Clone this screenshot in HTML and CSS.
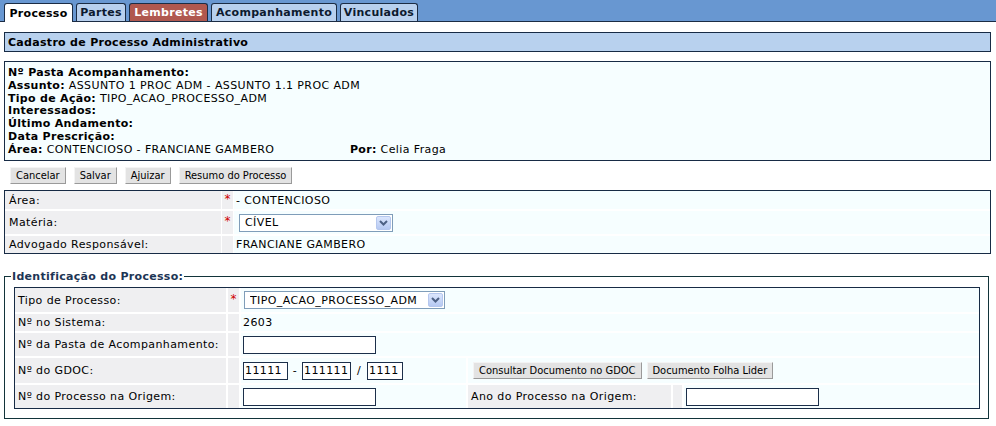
FILE: index.html
```html
<!DOCTYPE html>
<html lang="pt-BR">
<head>
<meta charset="utf-8">
<title>Cadastro de Processo Administrativo</title>
<link rel="stylesheet" href="styles.css">
</head>
<body>
<nav class="tabs">
  <a class="tab t1 active">Processo</a>
  <a class="tab t2">Partes</a>
  <a class="tab t3 alert">Lembretes</a>
  <a class="tab t4">Acompanhamento</a>
  <a class="tab t5">Vinculados</a>
</nav>
<main class="page">
  <h1 class="title">Cadastro de Processo Administrativo</h1>
  <div class="summary">
    <div><b>Nº Pasta Acompanhamento:</b></div>
    <div><b>Assunto:</b> ASSUNTO 1 PROC ADM - ASSUNTO 1.1 PROC ADM</div>
    <div><b>Tipo de Ação:</b> TIPO_ACAO_PROCESSO_ADM</div>
    <div><b>Interessados:</b></div>
    <div><b>Último Andamento:</b></div>
    <div><b>Data Prescrição:</b></div>
    <div class="split"><span class="area"><b>Área:</b> CONTENCIOSO - FRANCIANE GAMBERO</span><span><b>Por:</b> Celia Fraga</span></div>
  </div>
  <div class="actions">
    <button class="btn">Cancelar</button>
    <button class="btn">Salvar</button>
    <button class="btn">Ajuizar</button>
    <button class="btn">Resumo do Processo</button>
  </div>
  <div class="grid g1">
    <div class="lbl">Área:</div><div class="req">*</div><div class="val">- CONTENCIOSO</div>
    <div class="lbl">Matéria:</div><div class="req">*</div>
    <div class="val"><span class="select w154"><select><option>CÍVEL</option></select><span class="arrow"><svg width="9" height="6" viewBox="0 0 9 6"><path d="M1 1 L4.5 4.5 L8 1" fill="none" stroke="#4d6185" stroke-width="2"/></svg></span></span></div>
    <div class="lbl">Advogado Responsável:</div><div class="req"></div><div class="val">FRANCIANE GAMBERO</div>
  </div>
  <fieldset class="box">
    <legend>Identificação do Processo:</legend>
    <div class="grid g2">
      <div class="lbl">Tipo de Processo:</div><div class="req">*</div>
      <div class="val span4"><span class="select w201"><select><option>TIPO_ACAO_PROCESSO_ADM</option></select><span class="arrow"><svg width="9" height="6" viewBox="0 0 9 6"><path d="M1 1 L4.5 4.5 L8 1" fill="none" stroke="#4d6185" stroke-width="2"/></svg></span></span></div>

      <div class="lbl">Nº no Sistema:</div><div class="req"></div><div class="val span4">2603</div>

      <div class="lbl">Nº da Pasta de Acompanhamento:</div><div class="req"></div>
      <div class="val span4"><input class="inp w133" type="text"></div>

      <div class="lbl">Nº do GDOC:</div><div class="req"></div>
      <div class="val"><input class="inp w45" type="text" value="11111"><span class="sep">-</span><input class="inp w49" type="text" value="111111"><span class="sep wide">/</span><input class="inp w36" type="text" value="1111"></div>
      <div class="val span3 btns"><button class="btn">Consultar Documento no GDOC</button><button class="btn">Documento Folha Lider</button></div>

      <div class="lbl">Nº do Processo na Origem:</div><div class="req"></div>
      <div class="val"><input class="inp w133" type="text"></div>
      <div class="lbl">Ano do Processo na Origem:</div><div class="req"></div>
      <div class="val"><input class="inp w133" type="text"></div>
    </div>
  </fieldset>
</main>
</body>
</html>
```

FILE: styles.css
```css
* { box-sizing: border-box; }
html, body { margin: 0; padding: 0; background: #fff; }
body {
  font-family: "DejaVu Sans", Verdana, sans-serif;
  font-size: 11px;
  letter-spacing: 0.4px;
  color: #000;
}
b, .tab, .title, legend { letter-spacing: 0.3px; }
.tabs {
  display: flex;
  align-items: flex-end;
  gap: 3px;
  height: 22px;
  padding: 3px 0 0 4px;
  background: #6897d1;
  border-bottom: 1px solid #1b2c44;
}
.tab {
  display: flex;
  align-items: center;
  justify-content: center;
  height: 18px;
  padding: 0;
  font-weight: bold;
  color: #0d1a2e;
  background: #b8d0ee;
  border: 1px solid #1b2c44;
  border-bottom: none;
  border-radius: 3px 3px 0 0;
  white-space: nowrap;
}
.t1 { width: 69px; }
.t2 { width: 50px; }
.t3 { width: 79px; }
.t4 { width: 126px; }
.t5 { width: 78px; }
.tab.active { background: #fff; color: #000; height: 19px; margin-bottom: -1px; }
.tab.alert { background: #b0584f; color: #fff; }

.page { padding: 0 5px 0 4px; }
.title {
  margin: 10px 0 0;
  height: 20px;
  padding: 0 3px;
  display: flex;
  align-items: center;
  font-size: 11px;
  font-weight: bold;
  background: #b8d1ee;
  border: 1px solid #172b45;
}
.summary {
  margin-top: 9px;
  height: 100px;
  padding: 5px 3px 0;
  line-height: 12.8px;
  background: #f6feff;
  border: 1px solid #172b45;
}
.split { display: flex; }
.area { width: 342px; }

.actions {
  display: flex;
  gap: 8px;
  margin-top: 6px;
  padding-left: 6px;
}
.btn {
  height: 17px;
  padding: 0 5px;
  font-family: "DejaVu Sans Condensed", "Liberation Sans", sans-serif;
  font-size: 11px;
  letter-spacing: 0;
  color: #000;
  background: #e3e3e3;
  border: 1px solid;
  border-color: #f4f4f4 #9a9a9a #9a9a9a #f4f4f4;
  border-radius: 0;
  line-height: 14px;
}

.grid {
  display: grid;
  background: #fff;
  border: 1px solid #172b45;
}
.g1 {
  margin-top: 6px;
  grid-template-columns: 216px 11px 1fr;
  grid-template-rows: 18px 23px 17px;
  column-gap: 1px;
  row-gap: 2px;
}
.lbl, .req, .val { display: flex; align-items: center; }
.lbl { background: #efeff1; padding-left: 4px; }
.req { background: #efeff1; color: #d00000; justify-content: center; padding-bottom: 3px; font-size: 12px; letter-spacing: 0; }
.val { background: #f6feff; padding-left: 2px; }

.box {
  margin: 16px 2px 0 0;
  padding: 4px 8px 9px 9px;
  border: 1px solid #12343a;
  min-inline-size: 0;
}
.box legend {
  padding: 0 1px;
  margin-left: -3px;
  font-weight: bold;
  color: #1d3555;
  line-height: 13px;
}
.g2 {
  grid-template-columns: 211px 11px 225px 203px 9px 1fr;
  grid-template-rows: 24px 17px 23px 25px 23px;
  gap: 2px;
}
.g2 .lbl { padding-left: 3px; }
.span4 { grid-column: span 4; }
.span3 { grid-column: span 3; }

.select {
  display: inline-flex;
  align-items: center;
  height: 18px;
  margin-left: 3px;
  background: #fff;
  border: 1px solid #7f9db9;
}
.g2 .select { margin-left: 1px; }
.w154 { width: 154px; }
.w201 { width: 201px; }
.select select {
  flex: 1;
  min-width: 0;
  height: 16px;
  appearance: none;
  -webkit-appearance: none;
  border: 0;
  outline: none;
  background: transparent;
  font-family: "DejaVu Sans", Verdana, sans-serif;
  font-size: 11px;
  letter-spacing: 0.4px;
  color: #000;
  padding: 0 0 0 5px;
}
.arrow {
  display: flex;
  align-items: center;
  justify-content: center;
  width: 15px;
  height: 14px;
  margin-right: 1px;
  background: linear-gradient(#dbe6fd, #b6c9f2);
  border: 1px solid #b5c7ee;
  border-radius: 2px;
}

.inp {
  height: 18px;
  padding: 0 1px;
  margin: 0;
  font-family: "DejaVu Sans", Verdana, sans-serif;
  font-size: 11px;
  letter-spacing: 0.4px;
  color: #000;
  background: #fff;
  border: 1px solid #1c2f4a;
  border-radius: 0;
  outline: none;
}
.w133 { width: 133px; }
.w45 { width: 45px; }
.w49 { width: 49px; }
.w36 { width: 36px; }
.sep { display: inline-block; width: 14px; text-align: center; }
.sep.wide { width: 16px; }
.btns { gap: 5px; padding-left: 5px; }
```
